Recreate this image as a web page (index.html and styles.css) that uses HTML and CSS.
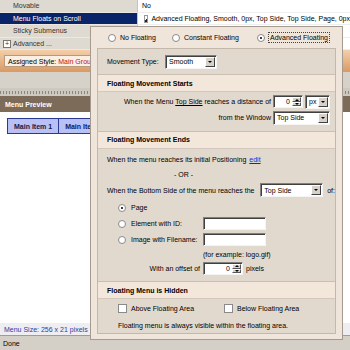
FILE: index.html
```html
<!DOCTYPE html>
<html>
<head>
    <link rel="stylesheet" href="styles.css">
</head>
<body>
    <div class="app">
        <div class="props">
            <div class="prop">
                <div class="prop-name">Movable</div>
                <div class="prop-value">No</div>
            </div>
            <div class="prop selected">
                <div class="prop-name">Menu Floats on Scroll</div>
                <div class="prop-value"><span class="edit-btn"></span>Advanced Floating, Smooth, 0px, Top Side, Top Side, Page, 0px</div>
            </div>
            <div class="prop">
                <div class="prop-name">Sticky Submenus</div>
                <div class="prop-value"></div>
            </div>
            <div class="prop">
                <div class="prop-name"><span class="expander">+</span>Advanced ...</div>
                <div class="prop-value"></div>
            </div>
        </div>
        <div class="style-band">
            <div class="assigned">Assigned Style: <span class="style-name">Main Group</span></div>
        </div>
        <div class="toolbar"></div>
        <div class="grip"></div>
        <div class="preview-title">Menu Preview</div>
        <div class="preview">
            <div class="menu-bar">
                <div class="menu-item first">Main Item 1</div>
                <div class="menu-item">Main Item 2</div>
            </div>
        </div>
        <div class="menu-size">Menu Size: 256 x 21 pixels</div>
        <div class="status">Done</div>
    </div>

    <div class="dialog">
        <div class="modes">
            <div class="opt no-float"><span class="radio"></span>No Floating</div>
            <div class="opt const-float"><span class="radio"></span>Constant Floating</div>
            <div class="opt"><span class="radio on"></span><span class="focus">Advanced Floating</span></div>
        </div>

        <div class="panel">
            <div class="row type-row">
                <span class="type-label">Movement Type:</span>
                <div class="select w-smooth">Smooth<span class="drop"></span></div>
            </div>

            <div class="section-head">Floating Movement Starts</div>
            <div class="area starts">
                <div class="row">
                    <span class="lbl-a">When the Menu <u>Top Side</u> reaches a distance of</span>
                    <div class="field w-dist">0<span class="spin"><span class="up"></span><span class="down"></span></span></div>
                    <div class="select w-px">px<span class="drop"></span></div>
                </div>
                <div class="row">
                    <span class="lbl-a">from the Window</span>
                    <div class="select w-side">Top Side<span class="drop"></span></div>
                </div>
            </div>

            <div class="section-head">Floating Movement Ends</div>
            <div class="area ends">
                <div class="row h16 indent">When the menu reaches its initial Positioning <a class="link">edit</a></div>
                <div class="row h13 or-row">- OR -</div>
                <div class="row h19 indent">
                    <span class="lbl-bottom">When the Bottom Side of the menu reaches the</span>
                    <div class="select w-bottom">Top Side<span class="drop"></span></div>
                    <span class="of">of:</span>
                </div>
                <div class="row h16 opts">
                    <span class="opt-label"><span class="radio on"></span>Page</span>
                </div>
                <div class="row h16 opts">
                    <span class="opt-label"><span class="radio"></span>Element with ID:</span>
                    <div class="field w-text"></div>
                </div>
                <div class="row h16 opts">
                    <span class="opt-label"><span class="radio"></span>Image with Filename:</span>
                    <div class="field w-text"></div>
                </div>
                <div class="row h13 example">(for example: logo.gif)</div>
                <div class="row h16">
                    <span class="lbl-offset">With an offset of</span>
                    <div class="field w-offset">0<span class="spin"><span class="up"></span><span class="down"></span></span></div>
                    <span class="unit">pixels</span>
                </div>
            </div>

            <div class="section-head">Floating Menu is Hidden</div>
            <div class="area hidden">
                <div class="row h17 opts">
                    <span class="check-label"><span class="check"></span>Above Floating Area</span>
                    <span class="check-label"><span class="check"></span>Below Floating Area</span>
                </div>
                <div class="row h16 opts">Floating menu is always visible within the floating area.</div>
            </div>
        </div>
    </div>
</body>
</html>
```

FILE: styles.css
```css
body {
    margin: 0;
    width: 350px;
    height: 350px;
    overflow: hidden;
    position: relative;
    background: #fff;
    font-family: "Liberation Sans", Arial, sans-serif;
    font-size: 7px;
    color: #000;
}

/* background window */
.app {
    display: flex;
    flex-direction: column;
    height: 350px;
}
.prop {
    display: flex;
    height: 12.5px;
}
.prop-name {
    width: 137px;
    padding-left: 13px;
    box-sizing: border-box;
    background: #dedad2;
    color: #333;
    display: flex;
    align-items: center;
    border-bottom: 1px solid #ebe8e2;
    position: relative;
}
.prop-value {
    flex: 1;
    padding-left: 4px;
    display: flex;
    align-items: center;
    white-space: nowrap;
    overflow: hidden;
    border-left: 1px solid #c8c4bc;
    border-bottom: 1px solid #eeeeee;
}
.selected .prop-name {
    background: #0a246a;
    color: #fff;
}
.edit-btn {
    width: 6px;
    height: 6px;
    margin: 0 3px 0 2px;
    background: linear-gradient(135deg, #fff 55%, #222 55%);
    border: 1px solid #999;
    align-self: flex-end;
    margin-bottom: 1px;
}
.expander {
    position: absolute;
    left: 3px;
    top: 2px;
    width: 6px;
    height: 6px;
    border: 1px solid #777;
    background: #fff;
    font-size: 7px;
    line-height: 6px;
    text-align: center;
}
.style-band {
    height: 22px;
    background: linear-gradient(#f3cfaa, #d99a64);
    padding: 5px 0 0 4px;
    box-sizing: border-box;
}
.assigned {
    width: 120px;
    height: 12px;
    padding-left: 3px;
    box-sizing: border-box;
    background: #fbeee2;
    border: 1px solid #b89a7c;
    display: flex;
    align-items: center;
    gap: 2px;
    white-space: nowrap;
}
.style-name {
    color: #c01010;
}
.toolbar {
    height: 16px;
    background: #d6d2ca;
}
.grip {
    height: 8px;
    background-color: #cdc9c1;
    background-image: repeating-linear-gradient(90deg, #8a867e 0 1px, transparent 1px 3px);
    background-size: 100% 3px;
    background-position: 0 3px;
    background-repeat: no-repeat;
}
.preview-title {
    height: 16px;
    background: #7d6b5a;
    color: #fff;
    font-weight: bold;
    padding-left: 5px;
    display: flex;
    align-items: center;
}
.preview {
    height: 211px;
    padding: 6px 7px;
    box-sizing: border-box;
}
.menu-bar {
    display: flex;
    height: 14px;
    border: 1px solid #2a3a90;
    background: #b8c0f6;
    width: 120px;
}
.menu-item {
    padding: 0 6px;
    display: flex;
    align-items: center;
    font-weight: bold;
    color: #101a50;
    white-space: nowrap;
}
.menu-item.first {
    border-right: 1px solid #2a3a90;
}
.menu-size {
    height: 12px;
    background: #eeeef2;
    color: #2840a0;
    padding-left: 4px;
    display: flex;
    align-items: center;
}
.status {
    height: 14px;
    background: #d4d0c8;
    border-top: 1px solid #a09c94;
    padding-left: 3px;
    display: flex;
    align-items: center;
}

/* floating options popup */
.dialog {
    position: absolute;
    left: 90px;
    top: 26px;
    width: 253px;
    height: 314px;
    box-sizing: border-box;
    background: #efe5da;
    border: 1px solid #a49a90;
}
.modes {
    height: 21px;
    display: flex;
    align-items: center;
    padding-left: 17px;
}
.opt {
    display: flex;
    align-items: center;
    white-space: nowrap;
}
.no-float {
    width: 64px;
}
.const-float {
    width: 85px;
}
.radio {
    width: 6px;
    height: 6px;
    border-radius: 50%;
    background: #fff;
    border: 1px solid #8a8a8a;
    margin-right: 4px;
    flex: none;
    position: relative;
}
.radio.on::after {
    content: "";
    position: absolute;
    left: 2px;
    top: 2px;
    width: 2px;
    height: 2px;
    border-radius: 50%;
    background: #000;
}
.focus {
    outline: 1px dotted #444;
    padding: 1px 1px;
}
.panel {
    margin-left: 6px;
    width: 239px;
    height: 286px;
    box-sizing: border-box;
    background: #e2d9ce;
    border: 1px solid #c4b8aa;
    display: flex;
    flex-direction: column;
}
.row {
    display: flex;
    align-items: center;
    white-space: nowrap;
    height: 16px;
}
.h13 { height: 13px; }
.h16 { height: 16px; }
.h17 { height: 17px; }
.h19 { height: 19px; }
.type-row {
    height: 26px;
    padding-left: 9px;
}
.type-label {
    width: 58px;
}
.section-head {
    height: 16px;
    border-top: 1px solid #cbbfb2;
    background: #f3e7dc;
    font-weight: bold;
    padding-left: 9px;
    display: flex;
    align-items: center;
}
.area {
    border-top: 1px solid #d2c7ba;
}
.starts {
    height: 38px;
    padding-top: 2px;
}
.ends {
    height: 133px;
    padding-top: 3px;
}
.hidden {
    height: 33px;
    padding-top: 1px;
}
.lbl-a {
    width: 173px;
    text-align: right;
    margin-right: 2px;
}
.indent {
    padding-left: 9px;
}
.or-row {
    padding-left: 76px;
}
.lbl-bottom {
    width: 156px;
}
.of {
    margin-left: 4px;
}
.opts {
    padding-left: 20px;
}
.opt-label {
    width: 85px;
    display: flex;
    align-items: center;
}
.opt-label .radio {
    margin-right: 5px;
}
.example {
    padding-left: 105px;
}
.lbl-offset {
    width: 102px;
    text-align: right;
    margin-right: 3px;
}
.unit {
    margin-left: 3px;
}
.check-label {
    width: 106px;
    display: flex;
    align-items: center;
}
.check {
    width: 7px;
    height: 7px;
    background: #fff;
    border: 1px solid #8a8a8a;
    margin-right: 4px;
}
.link {
    color: #1a1aee;
    text-decoration: underline;
    margin-left: 3px;
}

/* form controls */
.field,
.select {
    height: 13px;
    box-sizing: border-box;
    background: #fff;
    border: 1px solid;
    border-color: #808080 #f4f4f4 #f4f4f4 #808080;
    box-shadow: inset 1px 1px #404040;
    display: flex;
    align-items: center;
    position: relative;
}
.select {
    height: 14px;
    padding-left: 3px;
}
.drop {
    position: absolute;
    right: 1px;
    top: 1px;
    bottom: 1px;
    width: 10px;
    box-sizing: border-box;
    background: #d6d2ca;
    border: 1px solid;
    border-color: #fff #404040 #404040 #fff;
    display: flex;
    align-items: center;
    justify-content: center;
}
.drop::after,
.spin .down::after,
.spin .up::after {
    content: "";
    border-left: 2px solid transparent;
    border-right: 2px solid transparent;
    border-top: 2px solid #000;
}
.spin .up::after {
    border-top: none;
    border-bottom: 2px solid #000;
}
.field {
    justify-content: flex-end;
    padding-right: 12px;
}
.w-text {
    width: 63px;
    padding-right: 0;
}
.w-dist { width: 30px; margin-right: 2px; }
.w-offset { width: 40px; }
.w-smooth { width: 52px; }
.w-px { width: 25px; }
.w-side { width: 57px; }
.w-bottom { width: 64px; }
.spin {
    position: absolute;
    right: 1px;
    top: 1px;
    bottom: 1px;
    width: 9px;
    display: flex;
    flex-direction: column;
}
.spin .up,
.spin .down {
    flex: 1;
    background: #d6d2ca;
    border: 1px solid;
    border-color: #fff #555 #555 #fff;
    display: flex;
    align-items: center;
    justify-content: center;
}
```
